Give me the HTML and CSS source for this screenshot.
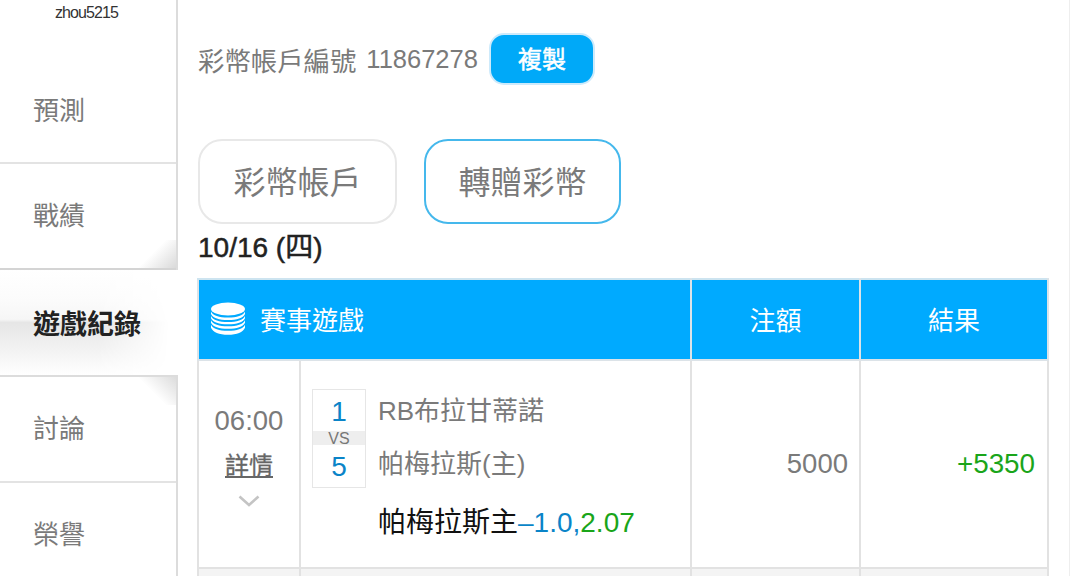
FILE: index.html
```html
<!DOCTYPE html>
<html lang="zh-Hant">
<head>
  <meta charset="UTF-8" />
  <title>遊戲紀錄</title>
  <link rel="stylesheet" href="styles.css">
</head>
<body>
  <div class="page">
    <nav class="sidebar">
      <div class="username">zhou5215</div>
      <a class="nav-item first">預測</a>
      <a class="nav-item before-active">戰績</a>
      <a class="nav-item active">遊戲紀錄</a>
      <a class="nav-item after-active">討論</a>
      <a class="nav-item last">榮譽</a>
    </nav>

    <main class="content">
      <div class="account-row">
        <span class="account-label">彩幣帳戶編號</span>
        <span class="account-number">11867278</span>
        <button class="copy-btn">複製</button>
      </div>

      <div class="tabs">
        <button class="tab">彩幣帳戶</button>
        <button class="tab tab-blue">轉贈彩幣</button>
      </div>

      <div class="date-title">10/16 (四)</div>

      <table class="game-table">
        <colgroup>
          <col class="col-time">
          <col class="col-match">
          <col class="col-bet">
          <col class="col-result">
        </colgroup>
        <thead>
          <tr>
            <th colspan="2" class="th-game">
              <span class="th-game-inner">
                <svg class="coins" viewBox="0 0 36 33" width="36" height="33">
                  <ellipse cx="18" cy="7" rx="17" ry="6.5" fill="#fff"/>
                  <path d="M1 9.500c2 4 8 6 17 6s15-2 17-6v2.400c-2 4-8 6-17 6s-15-2-17-6z" fill="#fff"/>
                  <path d="M1 13.900c2 4 8 6 17 6s15-2 17-6v2.400c-2 4-8 6-17 6s-15-2-17-6z" fill="#fff"/>
                  <path d="M1 18.300c2 4 8 6 17 6s15-2 17-6v2.400c-2 4-8 6-17 6s-15-2-17-6z" fill="#fff"/>
                  <path d="M1 22.700c2 4 8 6 17 6s15-2 17-6v3c-2 4.500-8 7-17 7s-15-2.500-17-7z" fill="#fff"/>
                </svg>
                賽事遊戲
              </span>
            </th>
            <th>注額</th>
            <th>結果</th>
          </tr>
        </thead>
        <tbody>
          <tr class="game-row">
            <td class="time-cell">
              <div class="time">06:00</div>
              <a class="detail-link">詳情</a>
              <svg class="chevron" viewBox="0 0 22 12" width="22" height="12">
                <path d="M1.500 1.500L11 10l9.500-8.500" fill="none" stroke="#c4c4c4" stroke-width="2.600"/>
              </svg>
            </td>
            <td class="match-cell">
              <div class="match-top">
                <div class="score-box">
                  <div class="score">1</div>
                  <div class="vs">VS</div>
                  <div class="score">5</div>
                </div>
                <div class="teams">
                  <div class="team">RB布拉甘蒂諾</div>
                  <div class="team">帕梅拉斯(主)</div>
                </div>
              </div>
              <div class="pick">帕梅拉斯主<span class="blue">–1.0,</span><span class="green">2.07</span></div>
            </td>
            <td class="num">5000</td>
            <td class="num green">+5350</td>
          </tr>
          <tr class="next-row">
            <td></td><td></td><td></td><td></td>
          </tr>
        </tbody>
      </table>
    </main>
  </div>
</body>
</html>
```

FILE: styles.css
```css
* {
  box-sizing: border-box;
}

html, body {
  margin: 0;
  height: 576px;
  overflow: hidden;
  background: #fff;
}

body {
  font-family: "Liberation Sans", "Noto Sans CJK TC", sans-serif;
  color: #7a7a7a;
}

.page {
  display: flex;
  height: 576px;
  width: 1070px;
  border-right: 1px solid #eee;
}

.sidebar {
  width: 178px;
  flex: none;
  border-right: 2px solid #dcdcdc;
  height: 576px;
}

.username {
  height: 56px;
  padding: 3px 0 0 55px;
  font-size: 16px;
  line-height: 20px;
  letter-spacing: -0.9px;
  color: #333;
}

.nav-item {
  display: flex;
  align-items: center;
  position: relative;
  height: 106px;
  padding: 0 0 0 33px;
  font-size: 26px;
  color: #7a7a7a;
  border-bottom: 2px solid #e3e3e3;
}

.nav-item.first {
  height: 108px;
  padding-bottom: 2px;
}

.nav-item.before-active {
  padding-bottom: 6px;
  border-bottom-color: #d4d4d4;
}

.nav-item.before-active::after {
  content: "";
  position: absolute;
  right: 0;
  bottom: 0;
  width: 42px;
  height: 28px;
  background: linear-gradient(135deg, rgba(255,255,255,0) 45%, #d9d9d9 100%);
}

.nav-item.active {
  isolation: isolate;
  margin-right: -2px;
  height: 107px;
  padding-bottom: 1px;
  font-size: 27px;
  font-weight: bold;
  color: #222;
  background: #fff;
  border-bottom: 2px solid #dcdcdc;
}

.nav-item.active::before {
  content: "";
  position: absolute;
  left: 0;
  right: 0;
  top: 0;
  bottom: 0;
  z-index: -1;
  background: linear-gradient(to bottom, #fff 0, #fbfbfb 30%, #f6f6f6 47%, #e6e6e6 50%, #f2f2f2 75%, #fff 100%);
  -webkit-mask-image: linear-gradient(to right, #000 55%, transparent 95%);
  mask-image: linear-gradient(to right, #000 55%, transparent 95%);
}

.nav-item.after-active {
  padding-bottom: 5px;
}

.nav-item.after-active::after {
  content: "";
  position: absolute;
  right: 0;
  top: 0;
  width: 42px;
  height: 28px;
  background: linear-gradient(45deg, rgba(255,255,255,0) 45%, #dcdcdc 100%);
}

.nav-item.last {
  height: 94px;
  padding-top: 4px;
  border-bottom: none;
}

.content {
  flex: 1;
  padding: 33px 0 0 20px;
}

.account-row {
  display: flex;
  align-items: center;
  height: 52px;
  font-size: 26.400px;
}

.account-number {
  font-size: 25.500px;
  margin-left: 10px;
}

.copy-btn {
  width: 106px;
  height: 52px;
  margin-left: 11px;
  border: 2px solid #cdeafb;
  border-radius: 15px;
  background: #00a9f8;
  color: #fff;
  font-family: inherit;
  font-size: 24px;
  font-weight: normal;
  -webkit-text-stroke: 0.5px #fff;
  padding: 0 0 4px;
}

.tabs {
  display: flex;
  gap: 27px;
  margin-top: 54px;
}

.tab {
  width: 199px;
  height: 85px;
  border: 2px solid #e8e8e8;
  border-radius: 24px;
  background: #fff;
  color: #7a7a7a;
  font-family: inherit;
  font-size: 32px;
  padding: 0 0 4px;
}

.tab-blue {
  width: 197px;
  border: 2px solid #45b8ec;
}

.date-title {
  height: 54px;
  padding-top: 5px;
  font-size: 28px;
  line-height: 38px;
  color: #222;
  -webkit-text-stroke: 0.5px #222;
}

.game-table {
  width: 850px;
  margin-left: -1px;
  table-layout: fixed;
  border-collapse: collapse;
  border: 2px solid #dfe3e6;
  border-bottom: none;
}

.col-time { width: 102px; }
.col-match { width: 391px; }
.col-bet { width: 169px; }
.col-result { width: 188px; }

.game-table th {
  height: 81px;
  padding: 0 0 2px;
  background: #00aaff;
  color: #fff;
  font-size: 26px;
  font-weight: normal;
  border: 2px solid #dce3e8;
  border-top-color: #cde4f0;
}

.game-table th.th-game {
  text-align: left;
  padding-left: 11px;
}

.th-game-inner {
  display: flex;
  align-items: center;
  gap: 14px;
}

.coins {
  flex: none;
}

.game-table td {
  border: 2px solid #e2e2e2;
  padding: 0;
}

.game-row td {
  height: 208px;
}

.time-cell {
  text-align: center;
  vertical-align: top;
  padding-top: 40px !important;
}

.time {
  font-size: 27.500px;
  line-height: 40px;
}

.detail-link {
  display: block;
  margin-top: 7px;
  font-size: 24px;
  line-height: 36px;
  color: #666;
  text-decoration: underline;
  -webkit-text-stroke: 0.3px #666;
}

.chevron {
  display: block;
  margin: 11px auto 0;
}

.match-cell {
  vertical-align: top;
  padding: 28px 0 0 11px !important;
}

.match-top {
  display: flex;
}

.score-box {
  width: 54px;
  height: 99px;
  border: 1px solid #e6e6e6;
  text-align: center;
  color: #0a84c8;
}

.score {
  height: 41px;
  font-size: 28px;
  line-height: 44px;
}

.score:last-child {
  height: 41px;
  line-height: 43px;
}

.vs {
  height: 14px;
  background: #eee;
  color: #777;
  font-size: 16px;
  line-height: 16px;
}

.teams {
  margin-left: 12px;
}

.team {
  height: 53px;
  font-size: 26px;
  line-height: 45px;
  white-space: nowrap;
}

.pick {
  margin: 6px 0 0 66px;
  font-size: 28px;
  line-height: 44px;
  color: #111;
  white-space: nowrap;
}

.blue {
  color: #0a84c8;
}

.green {
  color: #1aa51a;
}

.num {
  text-align: right;
  padding-right: 11px !important;
  font-size: 27.500px;
}

.num.green {
  padding-right: 12px !important;
  font-size: 27.800px;
}

.next-row td {
  height: 8px;
  border-bottom: none;
  background: #f4f4f4;
}
```
